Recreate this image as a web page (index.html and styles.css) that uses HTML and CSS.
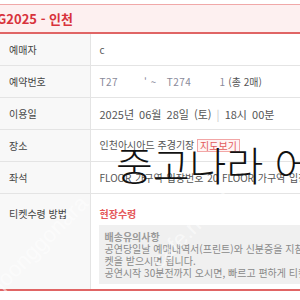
FILE: index.html
```html
<!DOCTYPE html>
<html lang="ko">
<head>
<meta charset="utf-8">
<link rel="stylesheet" href="styles.css">
</head>
<body>
<div class="page">
  <div class="title"><span class="title-text">G2025 - 인천</span></div>
  <table class="info">
    <colgroup><col class="c-label"><col></colgroup>
    <tr>
      <th>예매자</th>
      <td>c</td>
    </tr>
    <tr>
      <th>예약번호</th>
      <td><span class="blur">T27</span><span class="gap1"></span><span class="blur">' ~</span><span class="gap2"></span><span class="blur">T274</span><span class="gap3"></span><span class="blur">1</span> (총 2매)</td>
    </tr>
    <tr>
      <th>이용일</th>
      <td class="date">2025년 06월 28일 (토) <span class="sep">|</span> 18시 00분</td>
    </tr>
    <tr>
      <th>장소</th>
      <td>인천아시아드 주경기장 <span class="map-btn">지도보기</span></td>
    </tr>
    <tr>
      <th>좌석</th>
      <td class="seat">FLOOR 가구역 입장번호 20 FLOOR 가구역 입장번호 20</td>
    </tr>
    <tr class="row-receive">
      <th>티켓수령 방법</th>
      <td>
        <div class="receive">현장수령</div>
        <div class="notice">
          <p class="notice-title">배송유의사항</p>
          <p>공연당일날 예매내역서(프린트)와 신분증을 지참하시면 티</p>
          <p>켓을 받으시면 됩니다.</p>
          <p>공연시작 30분전까지 오시면, 빠르고 편하게 티켓을 받으실 수 있습니다.</p>
        </div>
      </td>
    </tr>
  </table>
  <div class="overlay">중고나라 어</div>
  <div class="wm wm-left">joonggonara</div>
  <div class="wm wm-mid">cafe.naver</div>
</div>
</body>
</html>
```
FILE: styles.css
```css
html, body {
  margin: 0;
  padding: 0;
  background: #fff;
}
body {
  font-family: "Noto Sans CJK KR", "Noto Sans", sans-serif;
  font-size: 10px;
  color: #333;
  width: 300px;
  height: 300px;
  overflow: hidden;
}
.page {
  position: relative;
  padding-top: 4px;
}
.title {
  height: 27px;
  background: #fdf0f0;
  border-top: 1px solid #f0a8a8;
  border-bottom: 2px solid #e06565;
  display: flex;
  align-items: center;
  overflow: hidden;
}
.title-text {
  margin-left: -3px;
  font-size: 13px;
  font-weight: bold;
  color: #d8333c;
  white-space: nowrap;
}
.info {
  width: 300px;
  border-collapse: collapse;
  table-layout: fixed;
  border-bottom: 2px solid #e06565;
}
.c-label {
  width: 90px;
}
.info th, .info td {
  height: 31px;
  padding: 0 0 0 9px;
  border-bottom: 1px solid #e4e4e4;
  text-align: left;
  font-weight: normal;
  white-space: nowrap;
  overflow: hidden;
  line-height: 12px;
}
.info th {
  background: #f8f8f8;
  border-right: 1px solid #e4e4e4;
  color: #444;
}
.info td {
  color: #555;
}
.info td.date {
  font-size: 11px;
  word-spacing: 2px;
}
.info td.seat {
  word-spacing: 1px;
}
.info .row-receive th, .info .row-receive td {
  vertical-align: top;
  padding-top: 14px;
  height: auto;
  border-bottom: none;
}
.info .row-receive td {
  padding-bottom: 5px;
}
.blur {
  color: #8a8a9a;
  letter-spacing: 0.5px;
}
.gap1 { display: inline-block; width: 26px; }
.gap2 { display: inline-block; width: 10px; }
.gap3 { display: inline-block; width: 28px; }
.sep {
  color: #c8c8c8;
}
.map-btn {
  display: inline-block;
  padding: 0 2px;
  line-height: 11px;
  border: 1px solid #f2a6a6;
  background: #fff4f4;
  color: #e25a5a;
  font-size: 10px;
  vertical-align: middle;
}
.receive {
  color: #e5585a;
  font-weight: bold;
  margin-bottom: 5px;
}
.notice {
  background: #f0f0f0;
  margin-left: -1px;
  padding: 6px 6px 5px;
  color: #8a8a8a;
}
.notice p {
  margin: 0;
  line-height: 12px;
  white-space: nowrap;
}
.notice-title {
  font-weight: bold;
  color: #9a9a9a;
}
.overlay {
  position: absolute;
  left: 116px;
  top: 144px;
  font-size: 40px;
  font-weight: 300;
  color: #111;
  white-space: nowrap;
  line-height: 1;
}
.wm {
  position: absolute;
  font-family: "Liberation Sans", sans-serif;
  font-size: 22px;
  color: rgba(255, 255, 255, 0.55);
  white-space: nowrap;
  transform: rotate(-45deg);
  pointer-events: none;
}
.wm-left {
  left: -20px;
  top: 230px;
}
.wm-mid {
  left: 140px;
  top: 215px;
}
```
